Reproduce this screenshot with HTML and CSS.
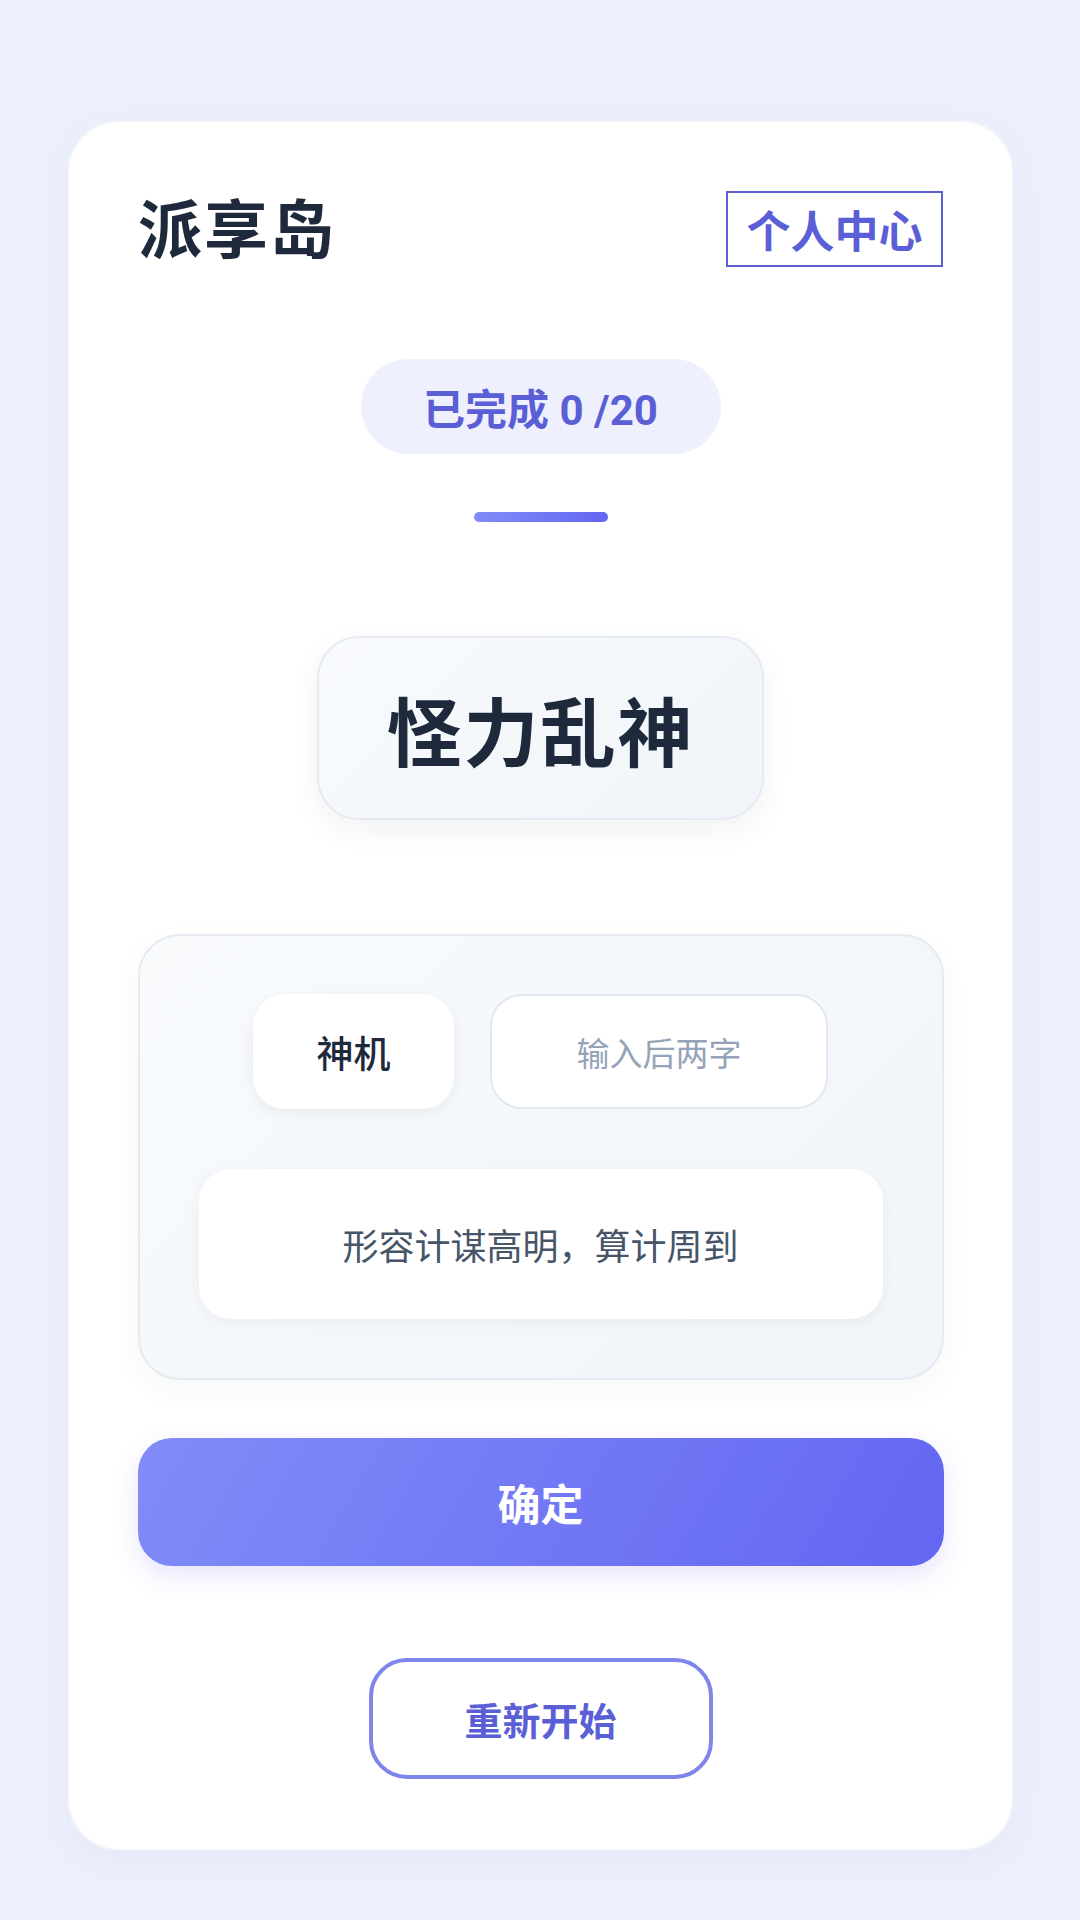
FILE: index.html
```html
<!DOCTYPE html>
<html lang="zh-CN">
<head>
<meta charset="utf-8">
<title>派享岛</title>
<link rel="stylesheet" href="styles.css">
</head>
<body>
<main class="card">
  <header class="header">
    <h1 class="brand">派享岛</h1>
    <a class="profile-link">个人中心</a>
  </header>
  <div class="progress">已完成 0 /20</div>
  <div class="divider"></div>
  <div class="word-card">怪力乱神</div>
  <section class="answer-panel">
    <div class="answer-row">
      <div class="given">神机</div>
      <div class="answer-input">输入后两字</div>
    </div>
    <div class="hint">形容计谋高明，算计周到</div>
  </section>
  <button class="btn-confirm">确定</button>
  <button class="btn-restart">重新开始</button>
</main>
</body>
</html>
```

FILE: styles.css
```css
* { box-sizing: border-box; }
html, body { margin: 0; padding: 0; }
body {
  background: #edf0fb;
  font-family: "Inter", "Noto Sans CJK SC", sans-serif;
  width: 1080px;
  height: 1920px;
}
.card {
  margin: 120px 66px 0 67px;
  width: 947px;
  height: 1731px;
  background: #ffffff;
  border: 2px solid #f0f2f9;
  border-radius: 52px;
  box-shadow: 0 10px 34px rgba(99, 102, 241, 0.06);
  padding: 69px 69px 0 69px;
  display: flex;
  flex-direction: column;
  align-items: center;
}
.header {
  width: 100%;
  display: flex;
  justify-content: space-between;
  align-items: center;
  height: 76px;
}
.brand {
  margin: -8px 0 0 0;
  font-family: "Noto Sans CJK SC", sans-serif;
  font-size: 64px;
  font-weight: 700;
  color: #1e293b;
  line-height: 76px;
  letter-spacing: 2px;
}
.profile-link {
  display: flex;
  align-items: center;
  justify-content: center;
  width: 217px;
  height: 76px;
  border: 2px solid #5e60ce;
  font-family: "Noto Sans CJK SC", sans-serif;
  font-size: 44px;
  font-weight: 700;
  color: #5b5fd6;
}
.progress {
  margin-top: 92px;
  width: 360px;
  height: 95px;
  border-radius: 48px;
  background: #eef0fd;
  color: #5b5fd6;
  font-family: "Roboto", "Noto Sans CJK SC", sans-serif;
  font-size: 42px;
  font-weight: 700;
  display: flex;
  align-items: center;
  justify-content: center;
}
.divider {
  margin-top: 58px;
  width: 134px;
  height: 10px;
  border-radius: 5px;
  background: linear-gradient(90deg, #818cf8, #6366f1);
}
.word-card {
  margin-top: 114px;
  width: 447px;
  height: 184px;
  border-radius: 42px;
  border: 2px solid #e6eaf1;
  background: linear-gradient(135deg, #f8fafc, #f1f5f9);
  box-shadow: 0 10px 30px rgba(30, 41, 59, 0.06);
  display: flex;
  align-items: center;
  justify-content: center;
  font-family: "Noto Sans CJK SC", sans-serif;
  font-size: 75px;
  font-weight: 700;
  color: #1e293b;
  letter-spacing: 2px;
}
.answer-panel {
  margin-top: 114px;
  width: 806px;
  height: 446px;
  border-radius: 42px;
  border: 2px solid #e6eaf1;
  background: linear-gradient(135deg, #f8fafc, #f1f5f9);
  box-shadow: 0 10px 30px rgba(30, 41, 59, 0.04);
  padding: 58px 59px 0 59px;
  display: flex;
  flex-direction: column;
  align-items: center;
}
.answer-row {
  display: flex;
  gap: 36px;
  justify-content: center;
}
.given {
  width: 201px;
  height: 115px;
  border-radius: 32px;
  background: #ffffff;
  box-shadow: 0 4px 14px rgba(30, 41, 59, 0.06);
  display: flex;
  align-items: center;
  justify-content: center;
  font-family: "Noto Sans CJK SC", sans-serif;
  font-size: 37px;
  font-weight: 500;
  color: #1e293b;
}
.answer-input {
  width: 338px;
  height: 115px;
  border-radius: 32px;
  background: #ffffff;
  border: 2px solid #e2e8f0;
  display: flex;
  align-items: center;
  justify-content: center;
  font-family: "Noto Sans CJK SC", sans-serif;
  font-size: 33px;
  color: #94a3b8;
}
.hint {
  margin-top: 60px;
  width: 684px;
  height: 150px;
  border-radius: 32px;
  background: #ffffff;
  box-shadow: 0 4px 14px rgba(30, 41, 59, 0.05);
  display: flex;
  align-items: center;
  justify-content: center;
  font-family: "Noto Sans CJK SC", sans-serif;
  font-size: 36px;
  color: #475569;
}
.btn-confirm {
  margin-top: 58px;
  width: 806px;
  height: 128px;
  border: none;
  border-radius: 34px;
  background: linear-gradient(120deg, #818cf8, #6366f1);
  box-shadow: 0 10px 26px rgba(99, 102, 241, 0.16);
  color: #ffffff;
  font-family: "Noto Sans CJK SC", sans-serif;
  font-size: 43px;
  font-weight: 700;
}
.btn-restart {
  margin-top: 92px;
  width: 344px;
  height: 121px;
  border: 4px solid #7f86ea;
  border-radius: 38px;
  background: #ffffff;
  color: #5b5fd6;
  font-family: "Noto Sans CJK SC", sans-serif;
  font-size: 38px;
  font-weight: 700;
}
```
